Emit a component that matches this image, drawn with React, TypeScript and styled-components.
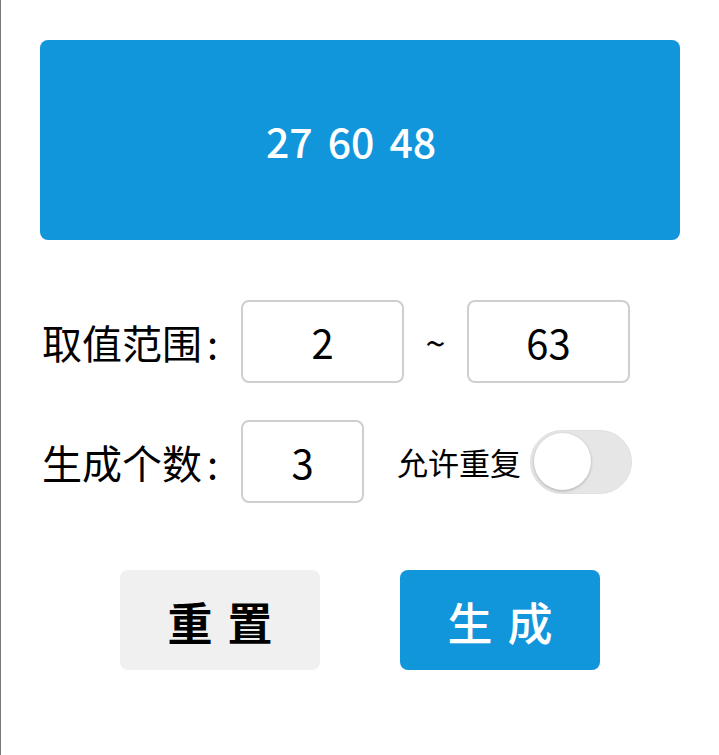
import React, { useState } from "react";
import styled, { createGlobalStyle } from "styled-components";

const GlobalStyle = createGlobalStyle`
  html, body { margin: 0; padding: 0; background: #fff; }
  body { font-family: "Noto Sans CJK SC", "Noto Sans", sans-serif; color: #000; }
  * { box-sizing: border-box; }
`;

const Page = styled.div`
  min-height: 100vh;
  border-left: 1px solid #7a7a7a;
  padding: 40px 39px 0 39px;
  display: flex;
  flex-direction: column;
`;

const ResultBox = styled.div`
  width: 640px;
  height: 200px;
  background: #1296db;
  border-radius: 8px;
  display: flex;
  align-items: center;
  justify-content: center;
  gap: 15px;
  padding-right: 18px;
  color: #fff;
  font-size: 41px;
  font-weight: 500;
  line-height: 1;
`;

const Num = styled.span``;

const Form = styled.div`
  margin-top: 60px;
  display: flex;
  flex-direction: column;
  gap: 37px;
`;

const Row = styled.div`
  display: flex;
  align-items: center;
  height: 83px;
`;

const Label = styled.span`
  width: 201px;
  padding-left: 2px;
  font-size: 40px;
  line-height: 1;
  white-space: nowrap;
`;

const Colon = styled.span`
  margin-left: 5px;
`;

const NumInput = styled.input<{ $w: number }>`
  width: ${(p) => p.$w}px;
  height: 83px;
  border: 2px solid #cfcfcf;
  border-radius: 8px;
  background: #fff;
  text-align: center;
  font-family: "Noto Sans CJK SC", "Noto Sans", sans-serif;
  font-size: 40px;
  color: #000;
  outline: none;
  padding: 0;
`;

const Tilde = styled.span`
  width: 63px;
  text-align: center;
  font-size: 36px;
  line-height: 1;
  padding-bottom: 2px;
`;

const SmallLabel = styled.span`
  margin-left: 33px;
  font-size: 31px;
  line-height: 1;
  white-space: nowrap;
`;

const Track = styled.button<{ $on: boolean }>`
  margin-left: 9px;
  width: 102px;
  height: 64px;
  border-radius: 32px;
  border: 1px solid #e0e0e0;
  background: ${(p) => (p.$on ? "#1296db" : "#e6e6e6")};
  padding: 3px;
  display: flex;
  justify-content: ${(p) => (p.$on ? "flex-end" : "flex-start")};
  align-items: center;
  cursor: pointer;
`;

const Knob = styled.span`
  width: 57px;
  height: 57px;
  border-radius: 50%;
  background: #fff;
  box-shadow: 0 1px 3px rgba(0, 0, 0, 0.25);
`;

const Buttons = styled.div`
  margin-top: 67px;
  display: flex;
  justify-content: center;
  gap: 80px;
`;

const Btn = styled.button<{ $primary?: boolean }>`
  width: 200px;
  height: 100px;
  border: none;
  border-radius: 8px;
  background: ${(p) => (p.$primary ? "#1296db" : "#f0f0f0")};
  color: ${(p) => (p.$primary ? "#fff" : "#000")};
  font-family: "Noto Sans CJK SC", "Noto Sans", sans-serif;
  font-size: 45px;
  font-weight: ${(p) => (p.$primary ? 500 : 700)};
  letter-spacing: 15px;
  text-indent: 15px;
  line-height: 1;
  padding-top: 4px;
  display: flex;
  align-items: center;
  justify-content: center;
  cursor: pointer;
`;

export default function App() {
  const [on, setOn] = useState(false);
  return (
    <>
      <GlobalStyle />
      <Page>
        <ResultBox>
          <Num>27</Num>
          <Num>60</Num>
          <Num>48</Num>
        </ResultBox>
        <Form>
          <Row>
            <Label>
              取值范围<Colon>:</Colon>
            </Label>
            <NumInput $w={163} defaultValue="2" />
            <Tilde>~</Tilde>
            <NumInput $w={163} defaultValue="63" />
          </Row>
          <Row>
            <Label>
              生成个数<Colon>:</Colon>
            </Label>
            <NumInput $w={123} defaultValue="3" />
            <SmallLabel>允许重复</SmallLabel>
            <Track $on={on} onClick={() => setOn(!on)}>
              <Knob />
            </Track>
          </Row>
        </Form>
        <Buttons>
          <Btn>重置</Btn>
          <Btn $primary>生成</Btn>
        </Buttons>
      </Page>
    </>
  );
}
